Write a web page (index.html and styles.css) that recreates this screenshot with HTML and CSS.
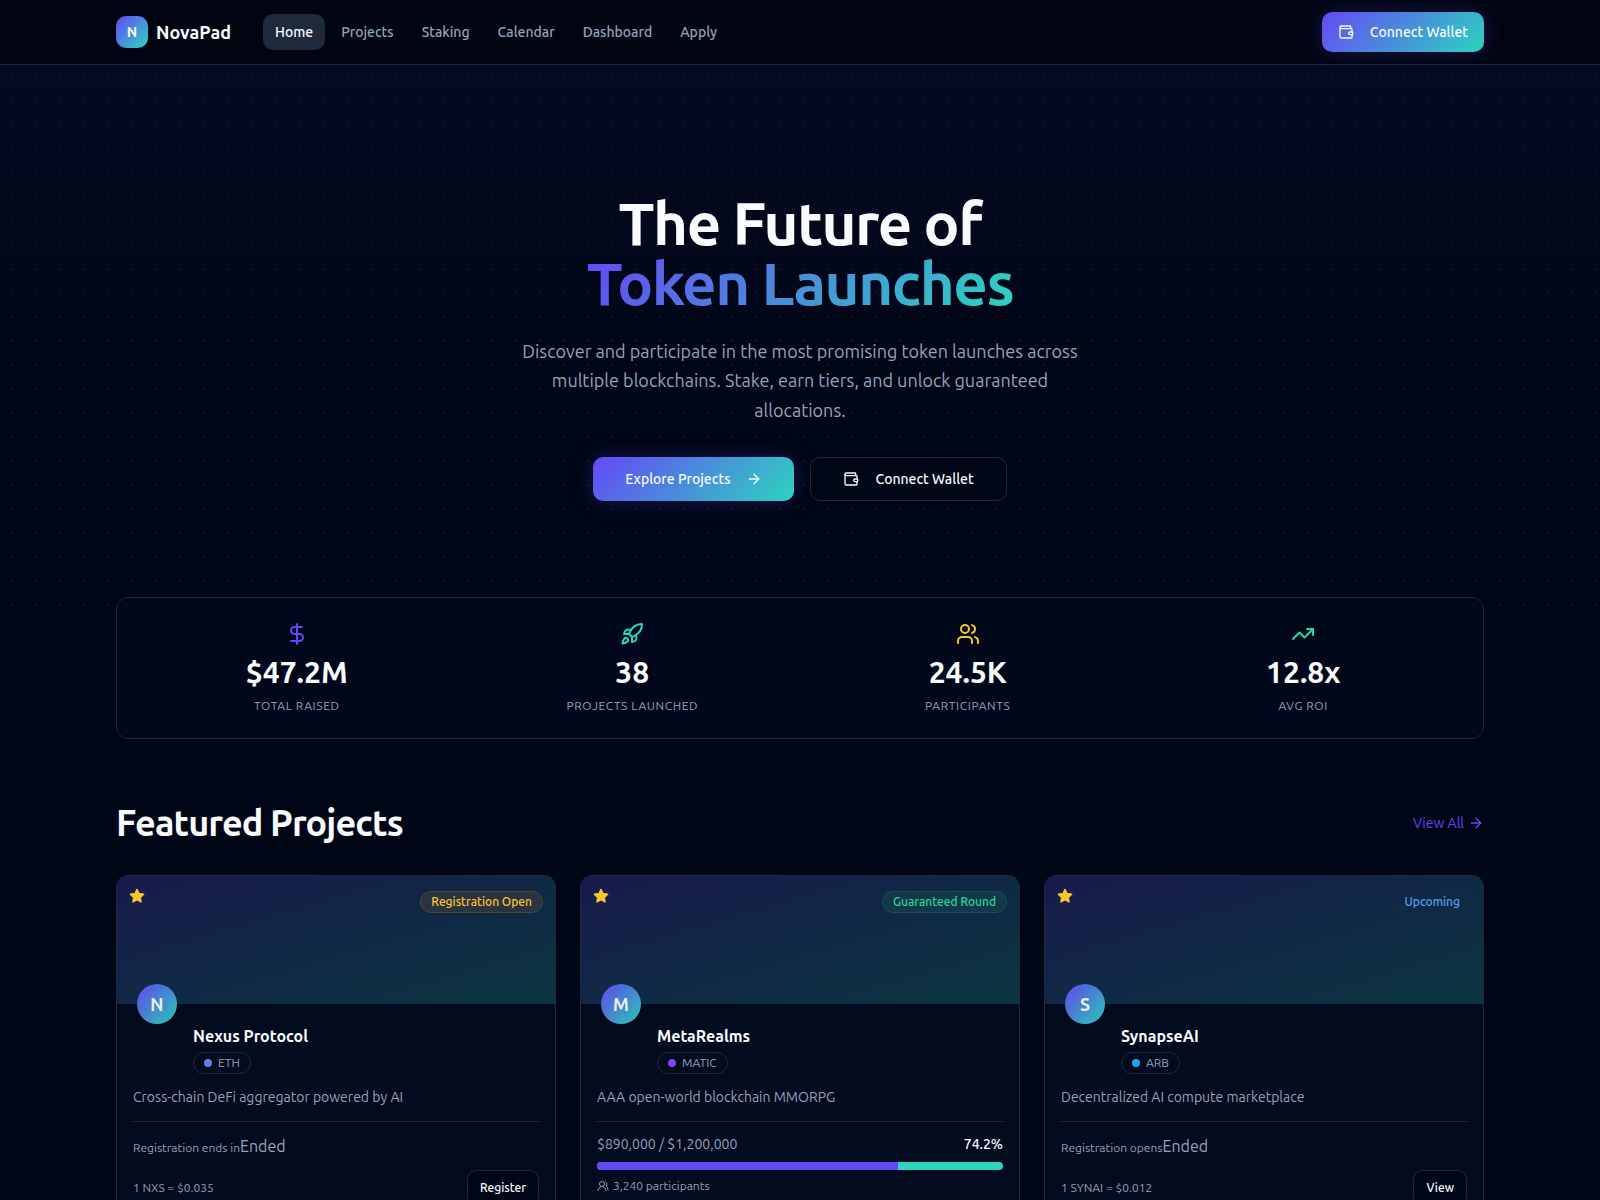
FILE: index.html
```
<!DOCTYPE html>
<html lang="en">
<head>
<meta charset="utf-8">
<meta name="viewport" content="width=device-width, initial-scale=1">
<title>NovaPad</title>
<link rel="stylesheet" href="styles.css">
</head>
<body>
<!-- shared icons -->
<svg class="sprite" aria-hidden="true">
	<symbol id="i-wallet" viewBox="0 0 24 24"><path d="M19 7V4a1 1 0 0 0-1-1H5a2 2 0 0 0 0 4h15a1 1 0 0 1 1 1v4h-3a2 2 0 0 0 0 4h3a1 1 0 0 0 1-1v-2a1 1 0 0 0-1-1"/><path d="M3 5v14a2 2 0 0 0 2 2h15a1 1 0 0 0 1-1v-4"/></symbol>
	<symbol id="i-arrow" viewBox="0 0 24 24"><path d="M5 12h14"/><path d="m12 5 7 7-7 7"/></symbol>
	<symbol id="i-dollar" viewBox="0 0 24 24"><path d="M12 2v20"/><path d="M17 5H9.5a3.5 3.5 0 0 0 0 7h5a3.5 3.5 0 0 1 0 7H6"/></symbol>
	<symbol id="i-rocket" viewBox="0 0 24 24"><path d="M4.5 16.5c-1.5 1.26-2 5-2 5s3.74-.5 5-2c.71-.84.7-2.13-.09-2.91a2.18 2.18 0 0 0-2.91-.09z"/><path d="m12 15-3-3a22 22 0 0 1 2-3.95A12.88 12.88 0 0 1 22 2c0 2.72-.78 7.5-6 11a22.35 22.35 0 0 1-4 2z"/><path d="M9 12H4s.55-3.03 2-4c1.62-1.08 5 0 5 0"/><path d="M12 15v5s3.03-.55 4-2c1.08-1.62 0-5 0-5"/></symbol>
	<symbol id="i-users" viewBox="0 0 24 24"><path d="M16 21v-2a4 4 0 0 0-4-4H6a4 4 0 0 0-4 4v2"/><circle cx="9" cy="7" r="4"/><path d="M22 21v-2a4 4 0 0 0-3-3.87"/><path d="M16 3.13a4 4 0 0 1 0 7.75"/></symbol>
	<symbol id="i-users-round" viewBox="0 0 24 24"><path d="M18 21a8 8 0 0 0-16 0"/><circle cx="10" cy="8" r="5"/><path d="M22 20c0-3.37-2-6.5-4-8a5 5 0 0 0-.45-8.3"/></symbol>
	<symbol id="i-trend" viewBox="0 0 24 24"><path d="m22 7-8.5 8.5-5-5L2 17"/><path d="M16 7h6v6"/></symbol>
	<symbol id="i-star" viewBox="0 0 24 24"><path d="M12 2l3.09 6.26L22 9.27l-5 4.87 1.18 6.88L12 17.77l-6.18 3.25L7 14.14 2 9.27l6.91-1.01L12 2z"/></symbol>
</svg>

<header class="header">
	<div class="container header-row">
		<a class="logo" href="#"><span class="logo-mark">N</span>NovaPad</a>
		<nav class="nav">
			<a class="active" href="#">Home</a>
			<a href="#">Projects</a>
			<a href="#">Staking</a>
			<a href="#">Calendar</a>
			<a href="#">Dashboard</a>
			<a href="#">Apply</a>
		</nav>
		<button type="button" class="btn btn-primary"><svg class="icon"><use href="#i-wallet"/></svg>Connect Wallet</button>
	</div>
</header>

<main>
	<section class="hero">
		<h1>The Future of<br><span class="gradient-text">Token Launches</span></h1>
		<p>Discover and participate in the most promising token launches across multiple blockchains. Stake, earn tiers, and unlock guaranteed allocations.</p>
		<div class="hero-buttons">
			<button type="button" class="btn btn-lg btn-primary">Explore Projects<svg class="icon"><use href="#i-arrow"/></svg></button>
			<button type="button" class="btn btn-lg btn-outline"><svg class="icon"><use href="#i-wallet"/></svg>Connect Wallet</button>
		</div>
	</section>

	<div class="container">
		<section class="stats">
			<div class="stat">
				<svg class="icon purple"><use href="#i-dollar"/></svg>
				<div class="stat-value">$47.2M</div>
				<div class="stat-label">Total Raised</div>
			</div>
			<div class="stat">
				<svg class="icon teal"><use href="#i-rocket"/></svg>
				<div class="stat-value">38</div>
				<div class="stat-label">Projects Launched</div>
			</div>
			<div class="stat">
				<svg class="icon yellow"><use href="#i-users"/></svg>
				<div class="stat-value">24.5K</div>
				<div class="stat-label">Participants</div>
			</div>
			<div class="stat">
				<svg class="icon green"><use href="#i-trend"/></svg>
				<div class="stat-value">12.8x</div>
				<div class="stat-label">Avg ROI</div>
			</div>
		</section>

		<section class="featured">
			<div class="section-head">
				<h2>Featured Projects</h2>
				<a class="view-all" href="#">View All<svg class="icon"><use href="#i-arrow"/></svg></a>
			</div>

			<div class="cards">
				<article class="card">
					<div class="banner">
						<svg class="icon star"><use href="#i-star"/></svg>
						<span class="badge badge-open">Registration Open</span>
						<span class="avatar">N</span>
					</div>
					<div class="card-body">
						<div class="card-title">
							<h3>Nexus Protocol</h3>
							<span class="chain"><i class="dot eth"></i>ETH</span>
						</div>
						<p class="desc">Cross-chain DeFi aggregator powered by AI</p>
						<div class="card-info">
							<div class="countdown"><small>Registration ends in</small>Ended</div>
							<div class="card-foot">
								<span>1 NXS = $0.035</span>
								<button type="button" class="btn btn-sm btn-outline">Register</button>
							</div>
						</div>
					</div>
				</article>

				<article class="card">
					<div class="banner">
						<svg class="icon star"><use href="#i-star"/></svg>
						<span class="badge badge-round">Guaranteed Round</span>
						<span class="avatar">M</span>
					</div>
					<div class="card-body">
						<div class="card-title">
							<h3>MetaRealms</h3>
							<span class="chain"><i class="dot matic"></i>MATIC</span>
						</div>
						<p class="desc">AAA open-world blockchain MMORPG</p>
						<div class="card-info">
							<div class="raised"><span>$890,000 / $1,200,000</span><b>74.2%</b></div>
							<div class="bar"><div class="bar-fill" style="width:74.2%"></div></div>
							<div class="people"><svg class="icon"><use href="#i-users-round"/></svg>3,240 participants</div>
						</div>
					</div>
				</article>

				<article class="card">
					<div class="banner">
						<svg class="icon star"><use href="#i-star"/></svg>
						<span class="badge badge-soon">Upcoming</span>
						<span class="avatar">S</span>
					</div>
					<div class="card-body">
						<div class="card-title">
							<h3>SynapseAI</h3>
							<span class="chain"><i class="dot arb"></i>ARB</span>
						</div>
						<p class="desc">Decentralized AI compute marketplace</p>
						<div class="card-info">
							<div class="countdown"><small>Registration opens</small>Ended</div>
							<div class="card-foot">
								<span>1 SYNAI = $0.012</span>
								<button type="button" class="btn btn-sm btn-outline">View</button>
							</div>
						</div>
					</div>
				</article>
			</div>
		</section>
	</div>
</main>
</body>
</html>
```
FILE: styles.css
```
*{ margin:0; padding:0; box-sizing:border-box;}
:root{
	--bg:#010617;
	--card:#030b1f;
	--border:#1e293b;
	--text:#f8fafc;
	--muted:#94a3b8;
	--purple:#6548f5;
	--teal:#2dd4bf;
	--yellow:#fbc52d;
	--green:#2dd497;
	--grad:linear-gradient(135deg, var(--purple), var(--teal));
}
body{ background:var(--bg); color:var(--text); font:16px/24px Ubuntu, Lato, "Noto Sans", sans-serif;}
a{ color:inherit; text-decoration:none;}
.sprite{ display:none;}
.icon{ width:16px; height:16px; flex:none; fill:none; stroke:currentColor; stroke-width:2; stroke-linecap:round; stroke-linejoin:round;}
.purple{ color:var(--purple);}
.teal{ color:var(--teal);}
.yellow{ color:var(--yellow);}
.green{ color:var(--green);}
.container{ max-width:1400px; margin:0 auto; padding:0 16px;}

/* buttons */
.btn{ display:inline-flex; align-items:center; justify-content:center; gap:16px; height:40px; padding:0 16px; border:0; border-radius:10px; color:var(--text); font-family:inherit; font-size:14px; font-weight:500; cursor:pointer;}
.btn-lg{ height:44px; padding:0 32px;}
.btn-sm{ height:36px; padding:0 12px; font-size:12px;}
.btn-primary{ background:var(--grad); box-shadow:0 0 20px rgba(101,72,245,.25);}
.btn-outline{ background:var(--bg); border:1px solid var(--border);}

/* header */
.header{ background:#010512; border-bottom:1px solid var(--border);}
.header-row{ display:flex; align-items:center; height:64px;}
.logo{ display:flex; align-items:center; gap:8px; font-size:18px; font-weight:700;}
.logo-mark{ display:grid; place-items:center; width:32px; height:32px; border-radius:10px; background:var(--grad); font-size:14px;}
.nav{ display:flex; gap:4px; margin:0 auto 0 32px; font-size:14px; line-height:20px; font-weight:500; color:var(--muted);}
.nav a{ padding:8px 12px; border-radius:10px;}
.nav .active{ background:#1e293b; color:var(--text);}

/* hero */
.hero{ padding:128px 16px; text-align:center; background:radial-gradient(circle at center, #101828 1px, transparent 1px) 0 0/24px 24px, linear-gradient(#050a22, var(--bg) 50%);}
.hero h1{ font-size:60px; line-height:60px; font-weight:700; letter-spacing:-0.025em;}
.gradient-text{ display:inline-block; vertical-align:top; background:var(--grad); -webkit-background-clip:text; background-clip:text; color:transparent;}
.hero p{ max-width:576px; margin:24px auto 32px; color:var(--muted); font-size:18px; line-height:1.625;}
.hero-buttons{ display:flex; justify-content:center; gap:16px;}

/* stats */
.stats{ position:relative; display:grid; grid-template-columns:repeat(4,1fr); gap:24px; margin-top:-32px; padding:24px; background:#02081b; border:1px solid var(--border); border-radius:12px; text-align:center;}
.stat{ display:flex; flex-direction:column; align-items:center; gap:8px;}
.stat .icon{ width:24px; height:24px;}
.stat-value{ font-size:30px; line-height:36px; font-weight:700;}
.stat-label{ color:var(--muted); font-size:12px; line-height:16px; text-transform:uppercase; letter-spacing:0.05em;}

/* featured */
.featured{ padding:64px 0;}
.section-head{ display:flex; justify-content:space-between; align-items:center; margin-bottom:32px;}
.section-head h2{ font-size:36px; line-height:40px; font-weight:700; letter-spacing:-0.025em;}
.view-all{ display:flex; align-items:center; gap:4px; color:var(--purple); font-size:14px;}
.cards{ display:grid; grid-template-columns:repeat(3,1fr); gap:24px;}
.card{ background:var(--card); border:1px solid var(--border); border-radius:12px; overflow:hidden;}
.banner{ position:relative; display:flex; justify-content:space-between; align-items:flex-start; height:128px; padding:12px; background:linear-gradient(to bottom right, #181a4b, #102845 50%, #0c3540);}
.star{ fill:var(--yellow); stroke:var(--yellow);}
.badge{ margin-top:3px; padding:2px 10px; border:1px solid; border-radius:11px; font-size:12px; line-height:16px; font-weight:500;}
.badge-open{ background:#2a333f; border-color:#4e4639; color:var(--yellow);}
.badge-round{ background:#123849; border-color:#155053; color:var(--green);}
.badge-soon{ border-color:#182a42; color:#5b9df0;}
.avatar{ position:absolute; left:20px; bottom:-20px; display:grid; place-items:center; width:40px; height:40px; border-radius:50%; background:var(--grad); font-size:18px; font-weight:700; opacity:.95;}
.card-body{ padding:20px 16px 16px;}
.card-title{ display:flex; flex-direction:column; align-items:flex-start; gap:4px; padding-left:60px;}
.card-title h3{ font-size:16px; font-weight:700;}
.chain{ display:inline-flex; align-items:center; gap:6px; padding:2px 10px; border:1px solid var(--border); border-radius:11px; color:var(--muted); font-size:12px; line-height:16px;}
.dot{ width:8px; height:8px; border-radius:50%;}
.eth{ background:#627eea;}
.matic{ background:#8247e5;}
.arb{ background:#28a0f0;}
.desc{ margin:12px 0; color:var(--muted); font-size:14px; line-height:23px;}
.card-info{ padding-top:12px; border-top:1px solid var(--border); color:var(--muted);}
.countdown small{ font-size:12px; line-height:16px;}
.card-foot{ display:flex; justify-content:space-between; align-items:center; margin-top:12px; font-size:12px;}
.raised{ display:flex; justify-content:space-between; font-size:14px; line-height:20px;}
.raised b{ color:var(--text); font-weight:500;}
.bar{ height:8px; margin:8px 0; border-radius:4px; background:var(--teal); overflow:hidden;}
.bar-fill{ height:100%; background:var(--purple);}
.people{ display:flex; align-items:center; gap:4px; font-size:12px; line-height:16px;}
.people .icon{ width:12px; height:12px;}
```
